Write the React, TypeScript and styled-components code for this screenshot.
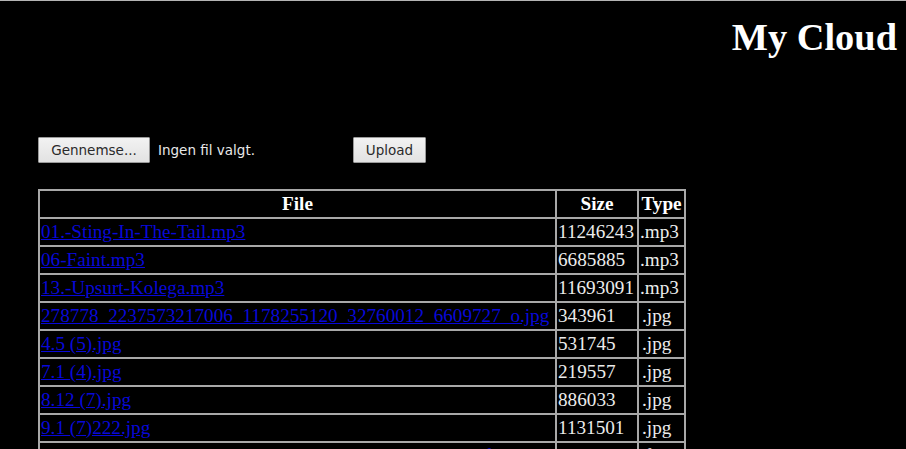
import React from "react";
import styled, { createGlobalStyle } from "styled-components";

const Global = createGlobalStyle`
  html, body { margin: 0; padding: 0; background: #000; overflow: hidden; }
  body { font-family: "Liberation Serif", "Times New Roman", serif; color: #fff; }
`;

const Page = styled.div`
  border-top: 1px solid #b4b4b4;
  min-height: 448px;
  background: #000;
  display: flex;
  flex-direction: column;
`;

const Title = styled.h1`
  margin: 14px 9px 0 0;
  font-size: 38.4px;
  line-height: 44px;
  font-weight: bold;
  text-align: right;
  color: #fff;
`;

const Content = styled.div`
  padding-left: 38px;
  display: flex;
  flex-direction: column;
  align-items: flex-start;
`;

const UploadForm = styled.form`
  margin-top: 78px;
  display: flex;
  align-items: center;
  font-family: "DejaVu Sans", Verdana, sans-serif;
  font-size: 13.5px;
`;

const Button = styled.button<{ $w: number }>`
  width: ${(p) => p.$w}px;
  height: 26px;
  box-sizing: border-box;
  border: 1px solid #9a9a9a;
  border-radius: 1px;
  background: linear-gradient(#f2f2f2, #e2e2e2);
  color: #2a2a2a;
  font-family: inherit;
  font-size: inherit;
  padding: 0;
  cursor: pointer;
`;

const FileLabel = styled.span`
  color: #e8e8e8;
  margin-left: 8px;
  width: 195px;
`;

const FileTable = styled.table`
  margin-top: 26px;
  border-collapse: collapse;
  table-layout: fixed;
  width: 646px;
  border: 2px solid #a8a8a8;
  font-size: 19.2px;
`;

const HeadCell = styled.th`
  border: 2px solid #a8a8a8;
  height: 26px;
  padding: 0 1px;
  font-weight: bold;
  color: #fff;
  text-align: center;
`;

const Cell = styled.td<{ $indent?: boolean }>`
  border: 2px solid #a8a8a8;
  height: 26px;
  padding: 0 1px 0 ${(p) => (p.$indent ? 3 : 1)}px;
  color: #ececec;
  white-space: nowrap;
  overflow: hidden;
`;

const FileLink = styled.a`
  color: #0808d8;
  text-decoration: underline;
`;

const files = [
  { name: "01.-Sting-In-The-Tail.mp3", size: "11246243", type: ".mp3" },
  { name: "06-Faint.mp3", size: "6685885", type: ".mp3" },
  { name: "13.-Upsurt-Kolega.mp3", size: "11693091", type: ".mp3" },
  { name: "278778_2237573217006_1178255120_32760012_6609727_o.jpg", size: "343961", type: ".jpg" },
  { name: "4.5 (5).jpg", size: "531745", type: ".jpg" },
  { name: "7.1 (4).jpg", size: "219557", type: ".jpg" },
  { name: "8.12 (7).jpg", size: "886033", type: ".jpg" },
  { name: "9.1 (7)222.jpg", size: "1131501", type: ".jpg" },
  { name: "DMT-140-ZWT-14-Mega-Crow-Hats-on-222-Sound-HD.flac", size: "2457120", type: ".flac" },
];

export default function App() {
  return (
    <>
      <Global />
      <Page>
        <Title>My Cloud</Title>
        <Content>
          <UploadForm onSubmit={(e) => e.preventDefault()}>
            <Button type="button" $w={112}>Gennemse...</Button>
            <FileLabel>Ingen fil valgt.</FileLabel>
            <Button type="submit" $w={73}>Upload</Button>
          </UploadForm>
          <FileTable>
            <colgroup>
              <col style={{ width: 517 }} />
              <col style={{ width: 82 }} />
              <col style={{ width: 47 }} />
            </colgroup>
            <thead>
              <tr>
                <HeadCell>File</HeadCell>
                <HeadCell>Size</HeadCell>
                <HeadCell>Type</HeadCell>
              </tr>
            </thead>
            <tbody>
              {files.map((f) => (
                <tr key={f.name}>
                  <Cell>
                    <FileLink href="#">{f.name}</FileLink>
                  </Cell>
                  <Cell>{f.size}</Cell>
                  <Cell $indent={f.type === ".jpg"}>{f.type}</Cell>
                </tr>
              ))}
            </tbody>
          </FileTable>
        </Content>
      </Page>
    </>
  );
}
